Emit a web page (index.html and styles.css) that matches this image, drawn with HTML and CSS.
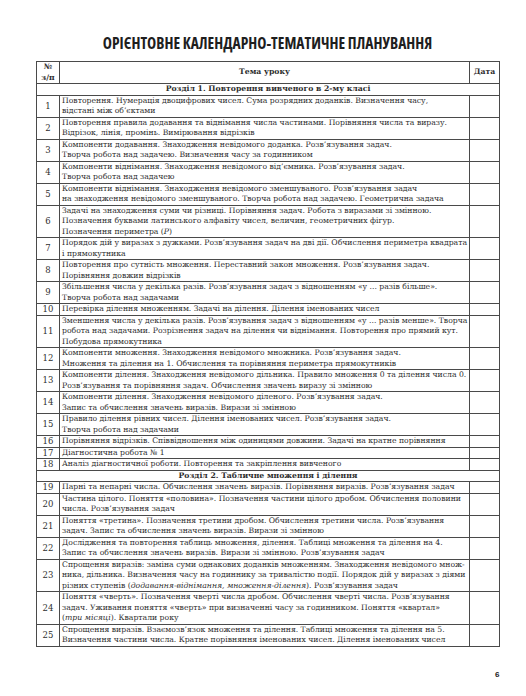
FILE: index.html
```html
<!DOCTYPE html>
<html lang="uk">
<head>
<meta charset="utf-8">
<link rel="stylesheet" href="styles.css">
</head>
<body>
<div class="page">
<h1 class="title">ОРІЄНТОВНЕ КАЛЕНДАРНО-ТЕМАТИЧНЕ ПЛАНУВАННЯ</h1>
<table class="plan">
<colgroup><col class="c-num"><col class="c-topic"><col class="c-date"></colgroup>
<thead>
<tr class="head"><th>№<br>з/п</th><th>Тема уроку</th><th>Дата</th></tr>
</thead>
<tbody>
<tr class="section"><td colspan="3">Розділ 1. Повторення вивченого в 2-му класі</td></tr>
<tr><td class="n">1</td><td class="t">Повторення. Нумерація двоцифрових чисел. Сума розрядних доданків. Визначення часу,<br>відстані між об’єктами</td><td></td></tr>
<tr><td class="n">2</td><td class="t">Повторення правила додавання та віднімання числа частинами. Порівняння числа та виразу.<br>Відрізок, лінія, промінь. Вимірювання відрізків</td><td></td></tr>
<tr><td class="n">3</td><td class="t">Компоненти додавання. Знаходження невідомого доданка. Розв’язування задач.<br>Творча робота над задачею. Визначення часу за годинником</td><td></td></tr>
<tr><td class="n">4</td><td class="t">Компоненти віднімання. Знаходження невідомого від’ємника. Розв’язування задач.<br>Творча робота над задачею</td><td></td></tr>
<tr><td class="n">5</td><td class="t">Компоненти віднімання. Знаходження невідомого зменшуваного. Розв’язування задач<br>на знаходження невідомого зменшуваного. Творча робота над задачею. Геометрична задача</td><td></td></tr>
<tr><td class="n">6</td><td class="t">Задачі на знаходження суми чи різниці. Порівняння задач. Робота з виразами зі змінною.<br>Позначення буквами латинського алфавіту чисел, величин, геометричних фігур.<br>Позначення периметра (<i>P</i>)</td><td></td></tr>
<tr><td class="n">7</td><td class="t">Порядок дій у виразах з дужками. Розв’язування задач на дві дії. Обчислення периметра квадрата<br>і прямокутника</td><td></td></tr>
<tr><td class="n">8</td><td class="t">Повторення про сутність множення. Переставний закон множення. Розв’язування задач.<br>Порівняння довжин відрізків</td><td></td></tr>
<tr><td class="n">9</td><td class="t">Збільшення числа у декілька разів. Розв’язування задач з відношенням «у ... разів більше».<br>Творча робота над задачами</td><td></td></tr>
<tr><td class="n">10</td><td class="t">Перевірка ділення множенням. Задачі на ділення. Ділення іменованих чисел</td><td></td></tr>
<tr><td class="n">11</td><td class="t">Зменшення числа у декілька разів. Розв’язування задач з відношенням «у ... разів менше». Творча<br>робота над задачами. Розрізнення задач на ділення чи віднімання. Повторення про прямий кут.<br>Побудова прямокутника</td><td></td></tr>
<tr><td class="n">12</td><td class="t">Компоненти множення. Знаходження невідомого множника. Розв’язування задач.<br>Множення та ділення на 1. Обчислення та порівняння периметра прямокутників</td><td></td></tr>
<tr><td class="n">13</td><td class="t">Компоненти ділення. Знаходження невідомого дільника. Правило множення 0 та ділення числа 0.<br>Розв’язування та порівняння задач. Обчислення значень виразу зі змінною</td><td></td></tr>
<tr><td class="n">14</td><td class="t">Компоненти ділення. Знаходження невідомого діленого. Розв’язування задач.<br>Запис та обчислення значень виразів. Вирази зі змінною</td><td></td></tr>
<tr><td class="n">15</td><td class="t">Правило ділення рівних чисел. Ділення іменованих чисел. Розв’язування задач.<br>Творча робота над задачами</td><td></td></tr>
<tr><td class="n">16</td><td class="t">Порівняння відрізків. Співвідношення між одиницями довжини. Задачі на кратне порівняння</td><td></td></tr>
<tr><td class="n">17</td><td class="t">Діагностична робота № 1</td><td></td></tr>
<tr><td class="n">18</td><td class="t">Аналіз діагностичної роботи. Повторення та закріплення вивченого</td><td></td></tr>
<tr class="section"><td colspan="3">Розділ 2. Табличне множення і ділення</td></tr>
<tr><td class="n">19</td><td class="t">Парні та непарні числа. Обчислення значень виразів. Порівняння виразів. Розв’язування задач</td><td></td></tr>
<tr><td class="n">20</td><td class="t">Частина цілого. Поняття «половина». Позначення частини цілого дробом. Обчислення половини<br>числа. Розв’язування задач</td><td></td></tr>
<tr><td class="n">21</td><td class="t">Поняття «третина». Позначення третини дробом. Обчислення третини числа. Розв’язування<br>задач. Запис та обчислення значень виразів. Вирази зі змінною</td><td></td></tr>
<tr><td class="n">22</td><td class="t">Дослідження та повторення таблиць множення, ділення. Таблиці множення та ділення на 4.<br>Запис та обчислення значень виразів. Вирази зі змінною. Розв’язування задач</td><td></td></tr>
<tr><td class="n">23</td><td class="t">Спрощення виразів: заміна суми однакових доданків множенням. Знаходження невідомого множ-<br>ника, дільника. Визначення часу на годиннику за тривалістю події. Порядок дій у виразах з діями<br>різних ступенів (<i>додавання-віднімання, множення-ділення</i>). Розв’язування задач</td><td></td></tr>
<tr><td class="n">24</td><td class="t">Поняття «чверть». Позначення чверті числа дробом. Обчислення чверті числа. Розв’язування<br>задач. Уживання поняття «чверть» при визначенні часу за годинником. Поняття «квартал»<br>(<i>три місяці</i>). Квартали року</td><td></td></tr>
<tr><td class="n">25</td><td class="t">Спрощення виразів. Взаємозв’язок множення та ділення. Таблиці множення та ділення на 5.<br>Визначення частини числа. Кратне порівняння іменованих чисел. Ділення іменованих чисел</td><td></td></tr>
</tbody>
</table>
<div class="pagenum">6</div>
</div>
</body>
</html>
```
FILE: styles.css
```css
html, body {
  margin: 0;
  padding: 0;
  background: #ffffff;
}
.page {
  width: 526px;
  height: 696px;
  padding: 34px 0 0 36px;
  box-sizing: border-box;
  position: relative;
}
.title {
  margin: 0 0 9px 0;
  width: 463px;
  text-align: center;
  font-family: "Open Sans", sans-serif;
  font-weight: 700;
  font-size: 15.5px;
  font-stretch: 80%;
  line-height: 18px;
  color: #1e1e1e;
}
.plan {
  width: 463px;
  border-collapse: collapse;
  table-layout: fixed;
  font-family: "DejaVu Serif", serif;
  font-size: 7.7px;
  line-height: 10.5px;
  color: #2e2e2e;
}
.c-num { width: 23px; }
.c-topic { width: 410px; }
.c-date { width: 30px; }
.plan td, .plan th {
  border: 1px solid #4a4a4a;
  padding: 0 2px;
  vertical-align: middle;
}
.plan th {
  font-weight: 700;
  height: 21px;
  text-align: center;
}
.plan .t {
  white-space: nowrap;
  text-align: left;
  overflow: hidden;
}
.plan .n {
  text-align: center;
  font-size: 8.5px;
}
.section td {
  text-align: center;
  font-weight: 700;
}
.pagenum {
  position: absolute;
  left: 495px;
  top: 670px;
  font-family: "Liberation Sans", sans-serif;
  font-weight: 700;
  font-size: 8px;
  color: #222;
}
```
